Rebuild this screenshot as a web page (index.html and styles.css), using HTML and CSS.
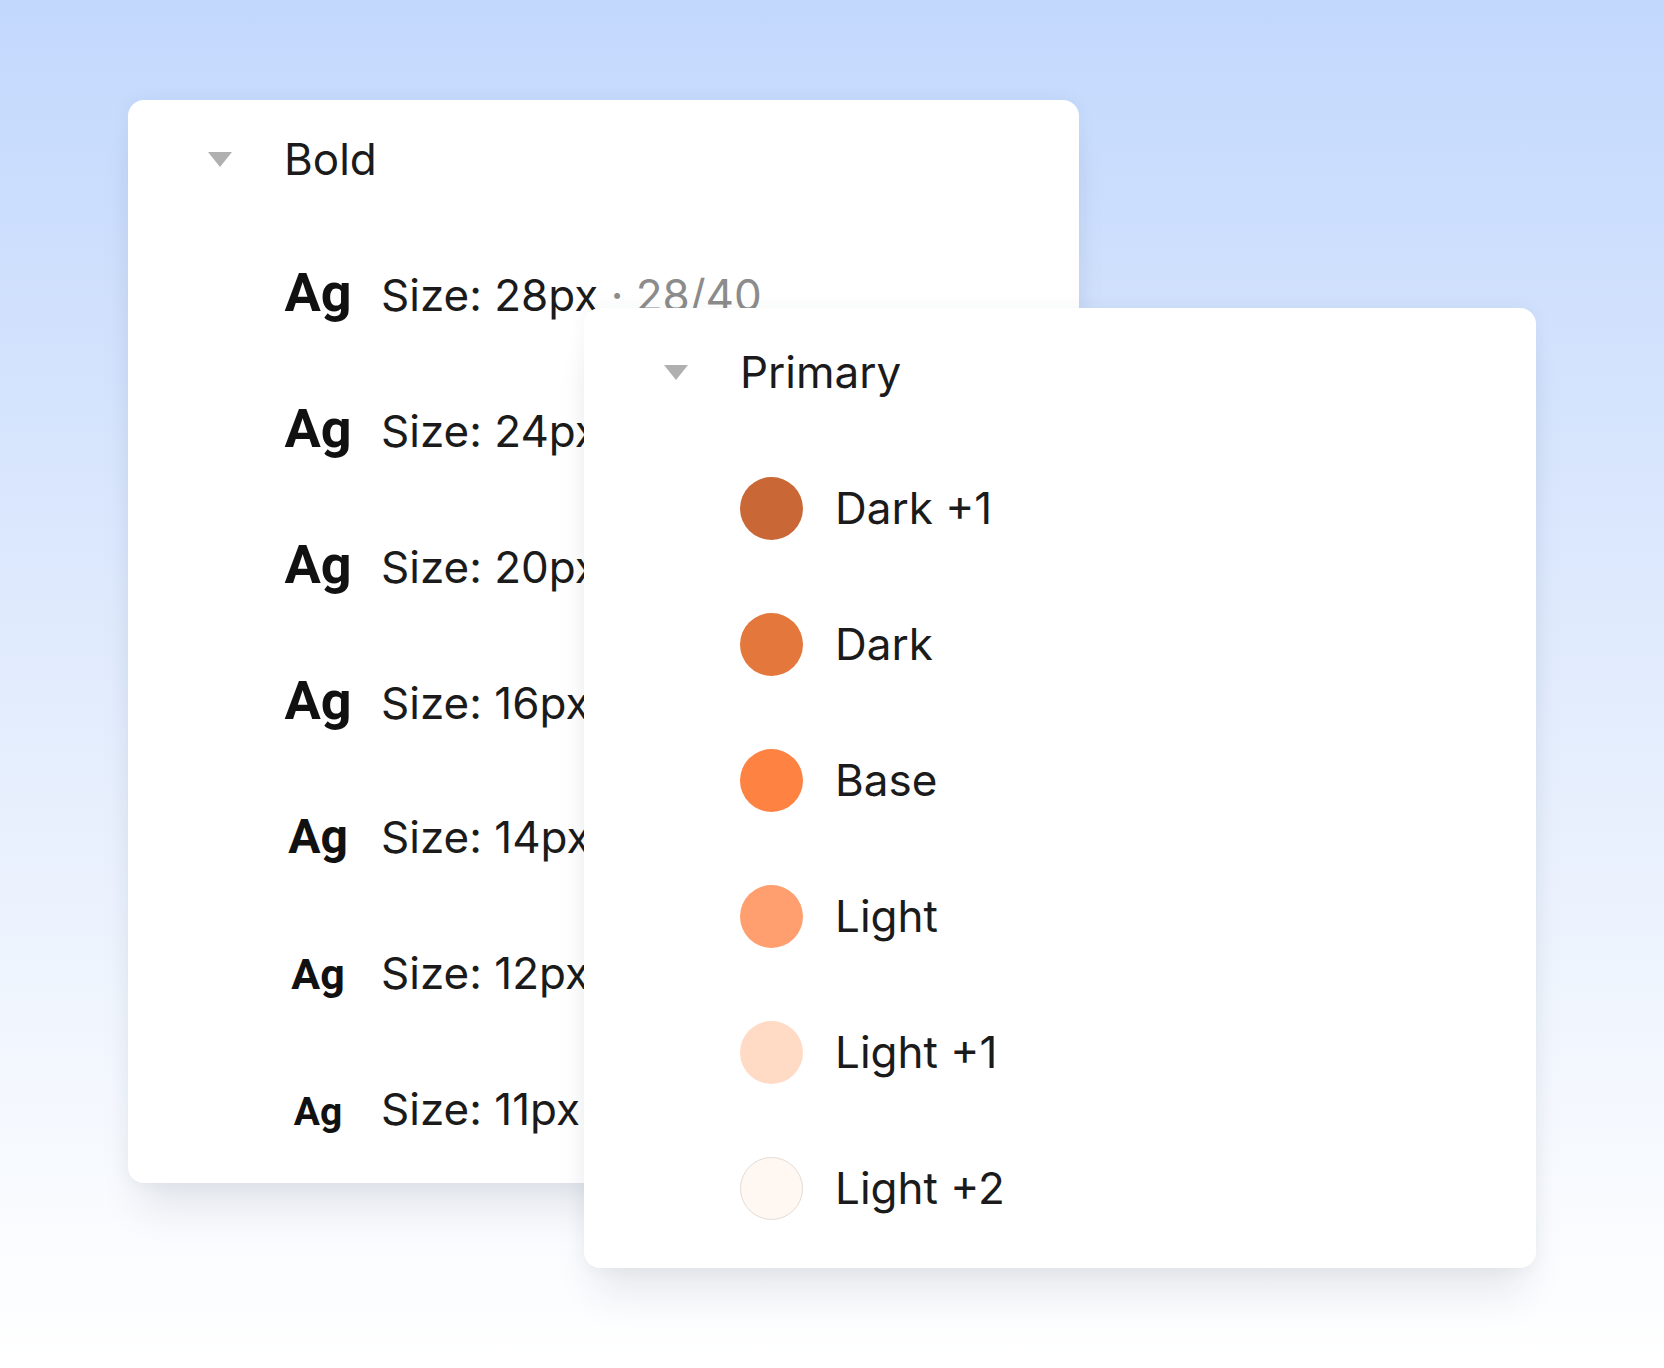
FILE: index.html
```html
<!DOCTYPE html>
<html lang="en">
<head>
<meta charset="utf-8">
<title>Styles</title>
<link rel="stylesheet" href="styles.css">
</head>
<body>
<div class="canvas">
  <section class="card card-type">
    <div class="group-head">
      <svg class="caret" viewBox="0 0 24 15" aria-hidden="true"><polygon points="0,0 24,0 12,15" /></svg>
      <span class="group-title">Bold</span>
    </div>
    <ul class="type-list">
      <li class="type-row"><div class="type-line"><span class="ag ag-xl">Ag</span><span class="type-label">Size: 28px <span class="muted">· 28/40</span></span></div></li>
      <li class="type-row"><div class="type-line"><span class="ag ag-xl">Ag</span><span class="type-label">Size: 24px</span></div></li>
      <li class="type-row"><div class="type-line"><span class="ag ag-xl">Ag</span><span class="type-label">Size: 20px</span></div></li>
      <li class="type-row"><div class="type-line"><span class="ag ag-xl">Ag</span><span class="type-label">Size: 16px</span></div></li>
      <li class="type-row"><div class="type-line"><span class="ag ag-l">Ag</span><span class="type-label">Size: 14px</span></div></li>
      <li class="type-row"><div class="type-line"><span class="ag ag-m">Ag</span><span class="type-label">Size: 12px</span></div></li>
      <li class="type-row"><div class="type-line"><span class="ag ag-s">Ag</span><span class="type-label">Size: 11px</span></div></li>
    </ul>
  </section>

  <section class="card card-color">
    <div class="group-head">
      <svg class="caret" viewBox="0 0 24 15" aria-hidden="true"><polygon points="0,0 24,0 12,15" /></svg>
      <span class="group-title">Primary</span>
    </div>
    <ul class="color-list">
      <li class="color-row"><span class="swatch sw-dark1"></span><span class="color-label">Dark +1</span></li>
      <li class="color-row"><span class="swatch sw-dark"></span><span class="color-label">Dark</span></li>
      <li class="color-row"><span class="swatch sw-base"></span><span class="color-label">Base</span></li>
      <li class="color-row"><span class="swatch sw-light"></span><span class="color-label">Light</span></li>
      <li class="color-row"><span class="swatch sw-light1"></span><span class="color-label">Light +1</span></li>
      <li class="color-row"><span class="swatch sw-light2"></span><span class="color-label">Light +2</span></li>
    </ul>
  </section>
</div>
</body>
</html>
```

FILE: styles.css
```css
html, body {
  margin: 0;
  padding: 0;
}

body {
  width: 1664px;
  height: 1368px;
  overflow: hidden;
  background: linear-gradient(180deg, #c2d8fd 0%, #dfeafd 45%, #f4f8fe 80%, #ffffff 100%);
  font-family: Inter, "Noto Sans", sans-serif;
  color: #1b1b1b;
}

.canvas {
  position: relative;
  height: 1368px;
  box-sizing: border-box;
  padding: 100px 0 0 128px;
}

.card {
  background: #ffffff;
  border-radius: 16px;
  box-sizing: border-box;
  padding-left: 80px;
  box-shadow: 0 36px 40px -12px rgba(40, 50, 70, 0.10), 0 0 18px rgba(40, 50, 70, 0.05);
}

.card-type {
  width: 951px;
  height: 1083px;
}

.card-color {
  position: absolute;
  left: 584px;
  top: 308px;
  width: 952px;
  height: 960px;
}

.group-head {
  display: flex;
  align-items: center;
}

.card-type .group-head {
  height: 118px;
}

.card-color .group-head {
  height: 128px;
}

.caret {
  width: 24px;
  height: 15px;
  flex: none;
  margin-right: 52px;
  fill: #b0b0b0;
}

.group-title {
  font-size: 44px;
  line-height: 1;
  color: #1b1b1b;
}

.type-list,
.color-list {
  list-style: none;
  margin: 0;
  padding: 0;
}

.type-list {
  margin-top: 7px;
  padding-left: 75px;
}

.type-row {
  height: 136px;
  display: flex;
  align-items: center;
}

.type-line {
  display: flex;
  align-items: baseline;
}

.ag {
  width: 70px;
  flex: none;
  text-align: center;
  font-family: Roboto, "Liberation Sans", Arial, sans-serif;
  font-weight: 700;
  line-height: 1;
  color: #111111;
}

.ag-xl { font-size: 54px; }
.ag-l { font-size: 48px; }
.ag-m { font-size: 43px; }
.ag-s { font-size: 39px; }

.type-label {
  margin-left: 28px;
  font-size: 44px;
  line-height: 1;
  white-space: nowrap;
  color: #1b1b1b;
}

.muted {
  color: #8c8c8c;
}

.color-list {
  margin-top: 4px;
  padding-left: 76px;
}

.color-row {
  height: 136px;
  display: flex;
  align-items: center;
}

.swatch {
  width: 63px;
  height: 63px;
  flex: none;
  border-radius: 50%;
  box-sizing: border-box;
  margin-right: 32px;
}

.sw-dark1 { background: #c96836; }
.sw-dark { background: #e3773c; }
.sw-base { background: #fe8343; }
.sw-light { background: #ff9e6e; }
.sw-light1 { background: #ffdac5; }
.sw-light2 { background: #fff7f2; border: 1.5px solid #e3dbd6; }

.color-label {
  font-size: 44px;
  line-height: 1;
  color: #1b1b1b;
}
```
